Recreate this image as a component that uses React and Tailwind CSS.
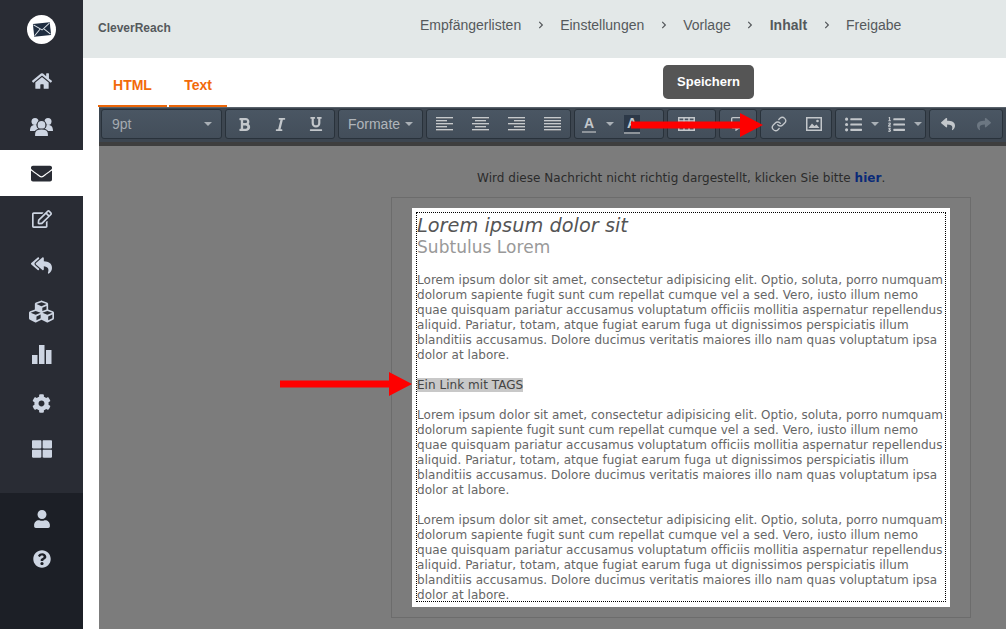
import {
  FaHome, FaEnvelope, FaRegEdit, FaReplyAll, FaCubes, FaCog, FaThLarge, FaUser, FaQuestionCircle,
  FaBold, FaItalic, FaUnderline, FaListUl, FaListOl, FaReply, FaShare, FaRegCommentAlt, FaChevronRight,
} from "react-icons/fa";
import { Link } from "lucide-react";

const loremText =
  "Lorem ipsum dolor sit amet, consectetur adipisicing elit. Optio, soluta, porro numquam dolorum sapiente fugit sunt cum repellat cumque vel a sed. Vero, iusto illum nemo quae quisquam pariatur accusamus voluptatum officiis mollitia aspernatur repellendus aliquid. Pariatur, totam, atque fugiat earum fuga ut dignissimos perspiciatis illum blanditiis accusamus. Dolore ducimus veritatis maiores illo nam quas voluptatum ipsa dolor at labore.";

const UsersIcon = () => (
  <svg width="23" height="20" viewBox="0 0 23 20" fill="currentColor">
    <circle cx="5" cy="4.5" r="3.5" />
    <circle cx="18" cy="4.5" r="3.5" />
    <path d="M0 14c0-4 1.5-6 5-6s5 2 5 6H0zM13 14c0-4 1.5-6 5-6s5 2 5 6H13z" />
    <circle cx="11.5" cy="8" r="4.5" stroke="#292c34" strokeWidth="1.2" />
    <path d="M4.5 19.5v-2.5c0-3.500 3-5 7-5s7 1.500 7 5v2.500z" stroke="#292c34" strokeWidth="1.2" />
  </svg>
);

const ChartIcon = () => (
  <svg width="20" height="19" viewBox="0 0 20 19" fill="currentColor" className="-mt-[5px]">
    <rect x="0" y="10" width="5.500" height="9" />
    <rect x="7" y="0" width="5.500" height="19" />
    <rect x="14" y="5" width="5.500" height="14" />
  </svg>
);

const TableIcon = () => (
  <svg width="17" height="14" viewBox="0 0 17 14" fill="none" stroke="currentColor" strokeWidth="1.500">
    <rect x="0.750" y="0.750" width="15.500" height="12.500" />
    <path d="M1 4h15M6 1v12M11 1v12" />
  </svg>
);

const ImageIcon = () => (
  <svg width="16" height="14" viewBox="0 0 16 14">
    <rect x="0.750" y="0.750" width="14.500" height="12.500" fill="none" stroke="currentColor" strokeWidth="1.500" />
    <path d="M2.500 11l3.500-4.500 2.500 2.500 2-1.500 3 3.500z" fill="currentColor" />
    <circle cx="11.500" cy="4" r="1.300" fill="currentColor" />
  </svg>
);

// x offset and width of the five lines of an align icon
const AlignIcon = ({ lines }) => (
  <svg width="17" height="15" viewBox="0 0 17 15">
    {lines.map(([x, w], i) => (
      <g key={i}>
        <rect x={x} y={i * 3 + 1} width={w} height="1" fill="#262d35" />
        <rect x={x} y={i * 3} width={w} height="1.500" fill="#c6cacd" />
      </g>
    ))}
  </svg>
);

const Arrow = ({ className }) => (
  <svg className={className} width="132" height="24" viewBox="0 0 132 24" fill="#fe0000">
    <path d="M0 8.500h109V0l23 12-23 12v-8.500H0z" />
  </svg>
);

const Caret = () => <span className="inline-block border-x-[4px] border-t-[4px] border-x-transparent border-t-[#aab0b6]" />;

const Btn = ({ w = "w-[36px]", children }) => (
  <div className={`${w} h-full flex items-center justify-center text-[#c3c7cb]`}>{children}</div>
);

const Group = ({ className, children }) => (
  <div className={`${className} h-[30px] shrink-0 flex items-center rounded-[3px] border border-[#29323b] bg-gradient-to-b from-[#4a5663] to-[#434e5a]`}>
    {children}
  </div>
);

const NavItem = ({ active, children }) => (
  <div className={`h-[46px] flex items-center justify-center text-[20px] ${active ? "bg-white text-[#292c34]" : "text-[#cdd5e2]"}`}>
    {children}
  </div>
);

const Step = ({ children, bold }) => (
  <span className={bold ? "font-bold text-[#55595c]" : ""}>{children}</span>
);

const Sep = () => <FaChevronRight className="text-[8px] text-[#55595c] mx-[15.5px]" />;

export default function App() {
  return (
    <div className="relative flex h-screen w-full overflow-hidden bg-white font-['Liberation_Sans',sans-serif]">
      {/* sidebar */}
      <aside className="w-[83px] shrink-0 flex flex-col bg-[#292c34]">
        <div className="h-[58px] flex items-center justify-center">
          <div className="w-[29px] h-[29px] rounded-full bg-white flex items-center justify-center">
            <svg width="18" height="15" viewBox="0 0 18 15" className="-rotate-6">
              <rect x="0.500" y="1" width="17" height="13" fill="#1f2d40" />
              <path d="M1 2l8 6 8-6M1 13l6-6M17 13l-6-6" stroke="#dfe5ea" strokeWidth="1" fill="none" />
            </svg>
          </div>
        </div>
        <NavItem><FaHome /></NavItem>
        <NavItem><UsersIcon /></NavItem>
        <NavItem active><FaEnvelope className="text-[21px]" /></NavItem>
        <NavItem><FaRegEdit /></NavItem>
        <NavItem><FaReplyAll className="text-[21px]" /></NavItem>
        <NavItem><FaCubes className="text-[25px]" /></NavItem>
        <NavItem><ChartIcon /></NavItem>
        <NavItem><FaCog className="text-[19px]" /></NavItem>
        <NavItem><FaThLarge /></NavItem>
        <div className="flex-1" />
        <div className="h-[136px] pt-[6px] bg-[#1c1f26] text-[#cdd5e2] text-[18px]">
          <div className="h-[40px] flex items-center justify-center"><FaUser /></div>
          <div className="h-[40px] flex items-center justify-center"><FaQuestionCircle /></div>
        </div>
      </aside>

      <main className="flex-1 min-w-0 flex flex-col">
        {/* top bar */}
        <header className="h-[58px] shrink-0 flex items-center bg-[#e3e8e8] pl-[15px] text-[#55595c]">
          <span className="w-[322px] pb-[2px] text-[12px] font-bold">CleverReach</span>
          <nav className="flex items-center pb-[8px] text-[14px]">
            <Step>Empfängerlisten</Step><Sep />
            <Step>Einstellungen</Step><Sep />
            <Step>Vorlage</Step><Sep />
            <Step bold>Inhalt</Step><Sep />
            <Step>Freigabe</Step>
          </nav>
        </header>

        {/* tabs */}
        <div className="h-[49px] shrink-0 flex items-end gap-[2px] pl-[15px] text-[14px] font-bold text-[#f26a0a]">
          <div className="w-[69px] h-[49px] pb-[9px] flex items-end justify-center border-b-2 border-[#ec6608]">HTML</div>
          <div className="w-[58px] h-[49px] pb-[9px] flex items-end justify-center border-b-2 border-[#ec6608]">Text</div>
        </div>

        <section className="flex-1 min-h-0 ml-[16px] flex flex-col bg-[#7c7c7c]">
          {/* editor toolbar */}
          <div className="h-[39px] shrink-0 flex gap-[3px] pl-[2px] pt-[1px] bg-[#3d4650] border-t border-[#59626b] border-b-[4px] border-b-[#3e3e3e] overflow-hidden">
            <Group className="w-[121px] justify-between pl-[10px] pr-[9px] text-[14px] text-[#a4aab0]">
              <span>9pt</span>
              <Caret />
            </Group>
            <Group className="w-[110px]">
              <Btn><FaBold className="text-[15px]" /></Btn>
              <Btn><FaItalic className="text-[15px]" /></Btn>
              <Btn><FaUnderline className="text-[14px]" /></Btn>
            </Group>
            <Group className="w-[85px] justify-center gap-[5px] text-[14px] text-[#b0b5ba]">
              <span>Formate</span>
              <Caret />
            </Group>
            <Group className="w-[145px]">
              <Btn><AlignIcon lines={[[0, 17], [0, 11], [0, 17], [0, 11], [0, 17]]} /></Btn>
              <Btn><AlignIcon lines={[[0, 17], [3, 11], [0, 17], [3, 11], [0, 17]]} /></Btn>
              <Btn><AlignIcon lines={[[0, 17], [6, 11], [0, 17], [6, 11], [0, 17]]} /></Btn>
              <Btn><AlignIcon lines={[[0, 17], [0, 17], [0, 17], [0, 17], [0, 17]]} /></Btn>
            </Group>
            <Group className="w-[90px]">
              <Btn w="w-[28px]">
                <span className="border-b-2 border-[#8e949a] px-[2px] text-[14px] font-bold leading-[15px]">A</span>
              </Btn>
              <Btn w="w-[14px]"><Caret /></Btn>
              <Btn w="w-[30px]">
                <span className="bg-[#2d3948] border-b-2 border-[#8e949a] px-[3px] text-[14px] font-bold leading-[17px]">A</span>
              </Btn>
            </Group>
            <Group className="w-[49px] pl-[10px] text-[#c3c7cb]"><TableIcon /></Group>
            <Group className="w-[38px] justify-center text-[#c3c7cb]"><FaRegCommentAlt className="text-[14px]" /></Group>
            <Group className="w-[72px]">
              <Btn w="w-[35px]"><Link size={16} strokeWidth={2} /></Btn>
              <Btn w="w-[35px]"><ImageIcon /></Btn>
            </Group>
            <Group className="w-[91px] pl-[4px]">
              <Btn w="w-[28px]"><FaListUl className="text-[17px]" /></Btn>
              <Btn w="w-[14px]"><Caret /></Btn>
              <Btn w="w-[30px]"><FaListOl className="text-[17px]" /></Btn>
              <Btn w="w-[14px]"><Caret /></Btn>
            </Group>
            <Group className="w-[74px]">
              <Btn><FaReply className="text-[14px]" /></Btn>
              <Btn><FaShare className="text-[14px] text-[#6c7782]" /></Btn>
            </Group>
          </div>

          {/* message preview */}
          <div className="flex-1 min-h-0 pl-[292px] pr-[35px] pt-[25px] font-['DejaVu_Sans',sans-serif] text-[12px] leading-[15px] tracking-[0.035px]">
            <p className="h-[26px] pl-[86px] text-[#2b2b2b] whitespace-nowrap">
              Wird diese Nachricht nicht richtig dargestellt, klicken Sie bitte <b className="text-[#0a2a78]">hier</b>.
            </p>
            <div className="h-[421px] border border-[#6c6c6c] px-[20px] pt-[10px]">
              <div className="h-[399px] bg-white p-[4px]">
                <div className="h-[390px] border border-dotted border-black pt-[2px] text-[#666] overflow-hidden">
                  <div className="text-[19.3px] leading-[21px] italic text-[#555]">Lorem ipsum dolor sit</div>
                  <div className="text-[17px] leading-[22px] text-[#999]">Subtulus Lorem</div>
                  <p className="mt-[15px]">{loremText}</p>
                  <p className="mt-[15px]"><span className="bg-[#c8c8c8] text-[#444]">Ein Link mit TAGS</span></p>
                  <p className="mt-[15px]">{loremText}</p>
                  <p className="mt-[15px]">{loremText}</p>
                </div>
              </div>
            </div>
          </div>
        </section>
      </main>

      {/* tooltip and annotation arrows */}
      <div className="absolute left-[663px] top-[65px] w-[91px] h-[34px] flex items-center justify-center rounded-[5px] bg-[#555555] text-[13px] font-bold text-white">
        Speichern
      </div>
      <Arrow className="absolute left-[631px] top-[113px]" />
      <Arrow className="absolute left-[280px] top-[372px]" />
    </div>
  );
}
